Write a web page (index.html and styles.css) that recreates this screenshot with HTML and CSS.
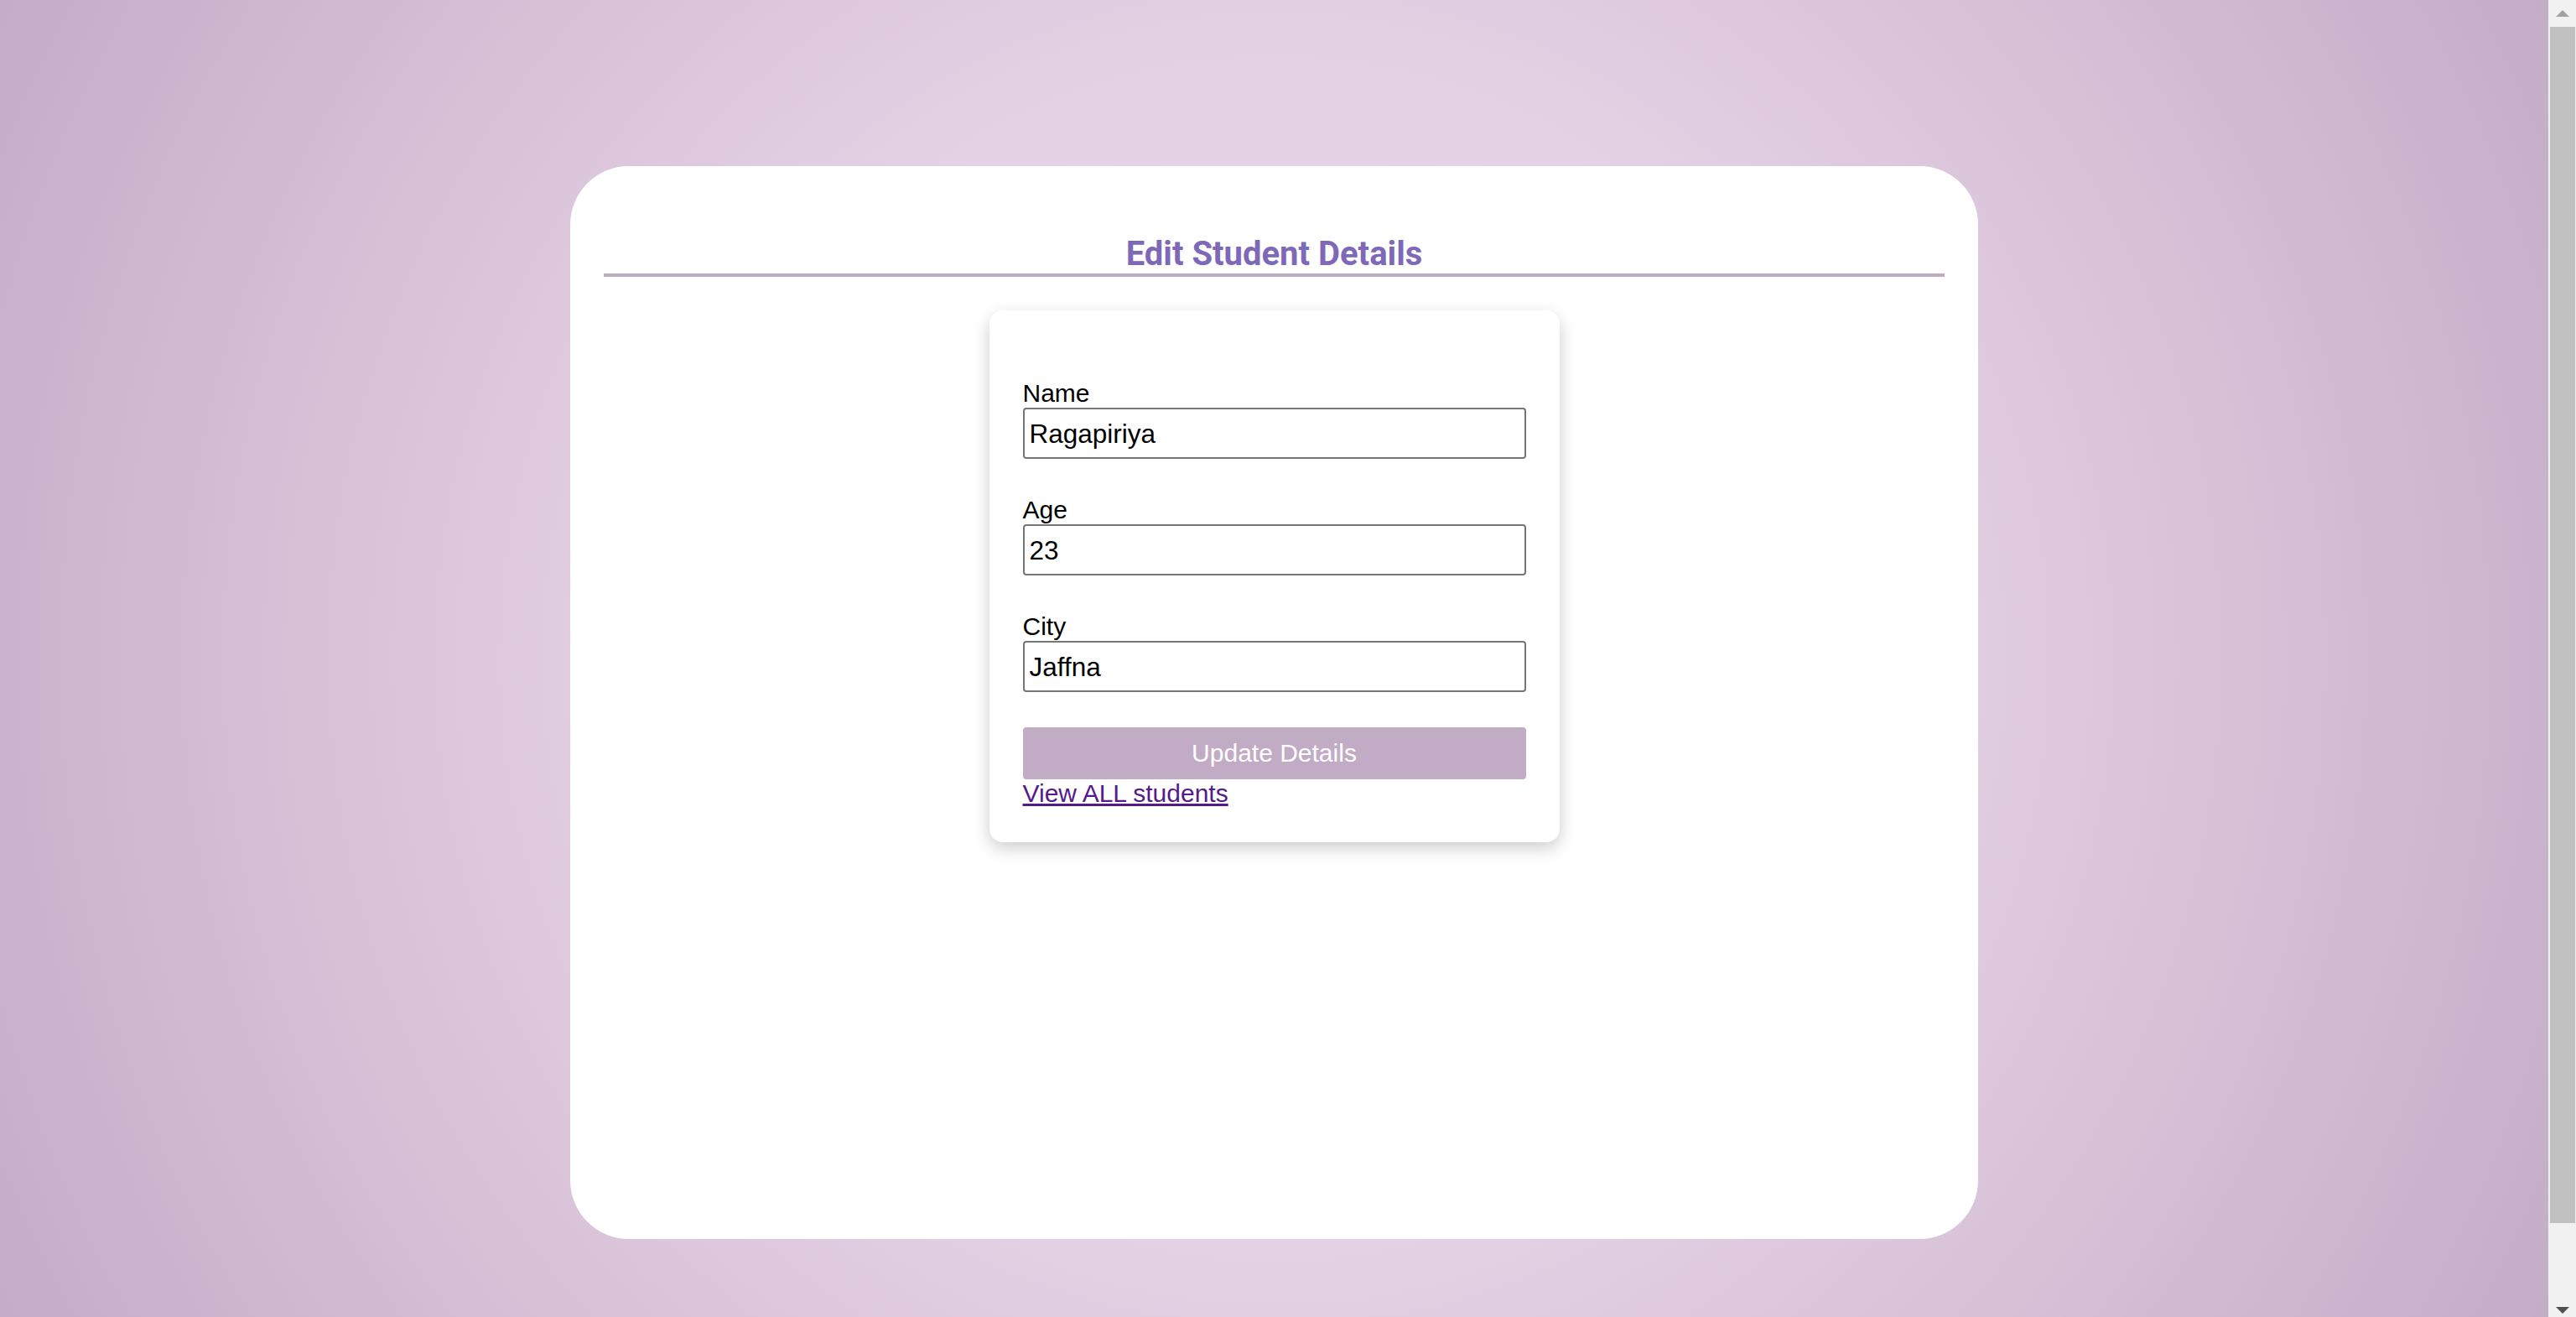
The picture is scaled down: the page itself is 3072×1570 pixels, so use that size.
FILE: index.html
```html
<!DOCTYPE html>
<html lang="en">
<head>
<meta charset="utf-8">
<title>Edit Student Details</title>
<link rel="stylesheet" href="styles.css">
</head>
<body>
<main class="page">
  <section class="card">
    <h2 class="title">Edit Student Details</h2>
    <form class="form-box">
      <div class="group">
        <label class="label" for="name">Name</label>
        <input class="field" id="name" type="text" value="Ragapiriya">
      </div>
      <div class="group">
        <label class="label" for="age">Age</label>
        <input class="field" id="age" type="text" value="23">
      </div>
      <div class="group">
        <label class="label" for="city">City</label>
        <input class="field" id="city" type="text" value="Jaffna">
      </div>
      <button class="submit" type="button">Update Details</button>
      <a class="back-link" href="#">View ALL students</a>
    </form>
  </section>
</main>
<aside class="scrollbar">
  <div class="sb-btn sb-up">
    <svg width="16" height="8" viewBox="0 0 16 8"><polygon points="0,8 8,0 16,8" fill="#a3a3a3"/></svg>
  </div>
  <div class="sb-track"><div class="sb-thumb"></div></div>
  <div class="sb-btn sb-down">
    <svg width="16" height="8" viewBox="0 0 16 8"><polygon points="0,0 16,0 8,8" fill="#505050"/></svg>
  </div>
</aside>
</body>
</html>
```
FILE: styles.css
```css
html, body {
  margin: 0;
  padding: 0;
  height: 100%;
  overflow: hidden;
}

body {
  display: flex;
  font-family: "Liberation Sans", Arial, sans-serif;
  color: #000;
}

.page {
  flex: 1;
  height: 100vh;
  box-sizing: border-box;
  padding-top: 198px;
  background: radial-gradient(circle at 50% 50%, #e9d6e9 0%, #e6d2e5 40%, #c3adc7 100%);
}

.card {
  width: 1679px;
  height: 1279px;
  margin: 0 auto;
  box-sizing: border-box;
  padding: 81px 40px 0;
  background: #fff;
  border-radius: 70px;
}

.title {
  margin: 0;
  font-family: Roboto, "Liberation Sans", sans-serif;
  font-weight: 700;
  font-size: 40px;
  line-height: normal;
  color: #7e69b9;
  text-align: center;
  border-bottom: 4px solid #c2aac5;
}

.form-box {
  width: 680px;
  margin: 40px auto 0;
  box-sizing: border-box;
  padding: 81px 40px 41px;
  background: #fff;
  border-radius: 16px;
  box-shadow: 0 7px 20px rgba(0, 0, 0, 0.2);
}

.group {
  margin-bottom: 43px;
}

.group:last-of-type {
  margin-bottom: 42px;
}

.label {
  display: block;
  font-size: 30px;
  line-height: 35px;
}

.field {
  display: block;
  width: 100%;
  height: 61px;
  box-sizing: border-box;
  margin: 0;
  padding: 1px 6px 0;
  border: 2px solid #767676;
  border-radius: 4px;
  font-family: "Liberation Sans", Arial, sans-serif;
  font-size: 31.5px;
  color: #000;
  background: #fff;
}

.submit {
  display: block;
  width: 100%;
  height: 62px;
  margin: 0;
  padding: 0;
  border: none;
  border-radius: 4px;
  background: #c2abc4;
  color: #fff;
  font-family: "Liberation Sans", Arial, sans-serif;
  font-size: 30px;
}

.back-link {
  font-size: 30px;
  line-height: normal;
  color: #551a8b;
  text-decoration: underline;
}

.scrollbar {
  width: 33px;
  height: 100vh;
  flex: none;
  display: flex;
  flex-direction: column;
  background: #f1f1f1;
}

.sb-btn {
  height: 32px;
  flex: none;
  display: flex;
  justify-content: center;
  box-sizing: border-box;
}

.sb-up {
  align-items: flex-start;
  padding-top: 12px;
}

.sb-down {
  align-items: flex-end;
  padding-bottom: 4px;
}

.sb-track {
  flex: 1;
}

.sb-thumb {
  width: 30px;
  height: 1426px;
  margin-left: 2px;
  background: #c1c1c1;
}
```
